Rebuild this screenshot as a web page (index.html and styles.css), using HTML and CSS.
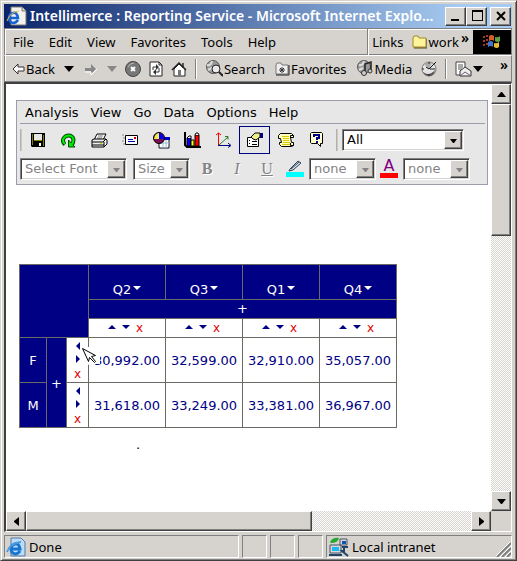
FILE: index.html
```html
<!DOCTYPE html>
<html lang="en">
<head>
    <meta charset="UTF-8">
    <meta name="viewport" content="width=device-width, initial-scale=1.0">
    <title>Intellimerce : Reporting Service</title>
    <link rel="stylesheet" href="styles.css">
</head>
<body>
    <div class="window">
        <header class="titlebar">
            <svg class="icon" width="21" height="20" viewBox="0 0 21 20"><path d="M5 1h11l4 4v14H5z" fill="#f4f2ec" stroke="#777"/><path d="M16 1v4h4" fill="#ddd" stroke="#777"/><path d="M12 14q-2 3-5 3-4-1-4-5t4-5 5 5H4" fill="none" stroke="#1464d8" stroke-width="2.5"/><path d="M1 15Q4 6 13 5" fill="none" stroke="#e5bd35" stroke-width="1"/></svg>
            <h1>Intellimerce : Reporting Service - Microsoft Internet Explo...</h1>
            <button class="winbtn" aria-label="Minimize"><svg width="12" height="12"><path d="M1 9h8v2H1z"/></svg></button>
            <button class="winbtn" aria-label="Maximize"><svg width="12" height="12"><path d="M1 0h11v11H1zM2 2v8h9V2z" fill-rule="evenodd"/></svg></button>
            <button class="winbtn close" aria-label="Close"><svg width="12" height="12"><path d="M2 2l8 8M10 2l-8 8" stroke="#000" stroke-width="2"/></svg></button>
        </header>

        <div class="menubar">
            <nav class="menus">
                <button>File</button>
                <button>Edit</button>
                <button>View</button>
                <button>Favorites</button>
                <button>Tools</button>
                <button>Help</button>
            </nav>
            <div class="links">
                <span>Links</span>
                <a href="#"><svg class="icon" width="15" height="14" viewBox="0 0 15 14"><path d="M1 12V3l1-2h4l1 2h7v9z" fill="#fdf39a" stroke="#a08a20"/><path d="M2 13h13V4" fill="none" stroke="#554a10"/></svg>work</a>
                <span class="more">»</span>
            </div>
            <div class="logo">
                <svg width="20" height="18" viewBox="0 0 20 18"><path d="M1 3h2v2H1zM1 7h2v2H1zM1 11h2v2H1zM4 2h2v2H4zM4 6h2v2H4zM4 10h2v2H4z" fill="#a23b2c"/><path d="M7 3q3-2 5 0v5q-2-2-5 0z" fill="#d95b2a"/><path d="M13 4q3 1 5-1v5q-2 2-5 0z" fill="#5da341"/><path d="M6 9q3-2 5 0v5q-2-2-5 0z" fill="#3c78cf"/><path d="M12 10q3 1 5-1v5q-2 2-5 0z" fill="#e7bd35"/></svg>
            </div>
        </div>

        <div class="toolbar">
            <button class="labeled"><svg width="13" height="12" viewBox="0 0 13 12"><path d="M1 6l5-5v3h6v4H6v3z" fill="#fff" stroke="#333"/></svg>Back</button>
            <svg class="icon" width="10" height="6"><path d="M0 0h10L5 6z"/></svg>
            <button class="forward" aria-label="Forward"><svg width="13" height="12" viewBox="0 0 13 12"><path d="M1 5h6V1l5 5-5 5V8H1z" fill="#888"/><path d="M1 9h6v3l6-6" fill="none" stroke="#fff"/></svg></button>
            <svg class="icon" width="10" height="6"><path d="M0 0h10L5 6z" fill="#888"/></svg>
            <button aria-label="Stop"><svg width="16" height="16" viewBox="0 0 16 16"><circle cx="8" cy="8" r="7.5" fill="#777" stroke="#444"/><path d="M3 6q2-4 6-4" stroke="#bbb" fill="none"/><path d="M6 6l4 4M10 6l-4 4" stroke="#fff" stroke-width="2"/></svg></button>
            <button aria-label="Refresh"><svg width="14" height="16" viewBox="0 0 14 16"><path d="M1 1h9l3 3v11H1z" fill="#fff" stroke="#222"/><path d="M10 1v3h3" fill="none" stroke="#222"/><path d="M4 9V6h4M10 7v4H6" fill="none" stroke="#333"/><path d="M7 3l3 3-3 3zM7 8v6l-3-3z" fill="#333"/></svg></button>
            <button aria-label="Home"><svg width="16" height="16" viewBox="0 0 16 16"><path d="M3 8v7h11V8L8 3z" fill="#fff" stroke="#222"/><path d="M11 2h2v5h-2z" fill="#555"/><path d="M1 9l7-7 7 7" fill="none" stroke="#222" stroke-width="1.5"/><path d="M7 9h3v6H7z" fill="#777"/></svg></button>
            <span class="sep"></span>
            <button class="labeled"><svg width="17" height="17" viewBox="0 0 17 17"><circle cx="7" cy="7" r="6.5" fill="#999" stroke="#555"/><path d="M1 5q4 1 5-4M2 10l4-2" stroke="#ddd" stroke-width="2" fill="none"/><circle cx="10" cy="9" r="4" fill="#e8e8e8" stroke="#222"/><path d="M13 12l4 4" stroke="#222" stroke-width="2"/></svg>Search</button>
            <button class="labeled"><svg width="15" height="14" viewBox="0 0 15 14"><path d="M1 12V3l1-2h4l1 2h6v9z" fill="#eee" stroke="#777"/><path d="M1 13h13V3" fill="none" stroke="#222"/><path d="M7 5v6M4 8h6M5 6l4 4M9 6l-4 4" stroke="#333"/></svg>Favorites</button>
            <button class="labeled"><svg width="17" height="17" viewBox="0 0 17 17"><circle cx="7" cy="7" r="6.5" fill="#999" stroke="#555"/><path d="M2 5q4 1 5-4M2 10l4-2" stroke="#ddd" stroke-width="2" fill="none"/><path d="M8 13V4l6-2v9" fill="none" stroke="#222" stroke-width="1.5"/><circle cx="7" cy="13" r="2.5" fill="#ccc" stroke="#333"/><circle cx="13" cy="11" r="2" fill="#ccc" stroke="#333"/></svg>Media</button>
            <button aria-label="History"><svg width="16" height="16" viewBox="0 0 16 16"><circle cx="8" cy="8" r="7" fill="#e4e4e4" stroke="#777"/><path d="M8 8L3 3q3-3 8-1z" fill="#aaa"/><path d="M2 11q6 5 12-2-1 6-6 6-4 0-6-4z" fill="#555"/><path d="M15 1L8 8 5 6" fill="none" stroke="#111"/><path d="M9 8h5M8 1v2M1 8h2M8 13v2" stroke="#222"/></svg></button>
            <span class="sep"></span>
            <button class="mail" aria-label="Mail"><svg width="17" height="16" viewBox="0 0 17 16"><path d="M1 1h9v13H1z" fill="#fff" stroke="#444"/><path d="M3 4h5M3 6h5M3 8h4" stroke="#555"/><path d="M5 10l5-4 6 4v5H5z" fill="#eee" stroke="#333"/><path d="M5 15l5-4 6 4" fill="none" stroke="#666"/></svg><svg width="10" height="6"><path d="M0 0h10L5 6z"/></svg></button>
            <span class="more">»</span>
        </div>

        <div class="view">
            <main class="page">
                <section class="panel">
                    <nav class="panel-menu">
                        <button>Analysis</button>
                        <button>View</button>
                        <button>Go</button>
                        <button>Data</button>
                        <button>Options</button>
                        <button>Help</button>
                    </nav>
                    <div class="tools">
                        <span class="handle"></span>
                        <button class="tool" aria-label="Save"><svg width="14" height="14"><path d="M0 0h14v14H1l-1-1z"/><path d="M1 1h1v11H1zM12 2h1v11h-1zM3 7h8v1H3z" fill="#808000"/><path d="M3 1h8v6H3z" fill="#e7e7e7"/><path d="M8 10h2v3H8z" fill="#fff"/></svg></button>
                        <button class="tool" aria-label="Refresh data"><svg width="15" height="15"><path d="M4 11.500Q1 9 2.500 5.500 4.500 2.500 7.500 2.500q4 0 5 4 0 3-1.500 5" fill="none" stroke="#004800" stroke-width="4"/><path d="M7.500 7v7h6.500z" fill="#0e0" stroke="#004800"/><path d="M4 11Q1 9 2.500 5.500 4.500 2.500 7.500 2.500q4 0 5 4 0 3-2 5" fill="none" stroke="#0e0" stroke-width="2"/></svg></button>
                        <button class="tool" aria-label="Print"><svg width="17" height="15"><path d="M6 1h9l-3 6H3z" fill="#fff" stroke="#000"/><path d="M7 3h5M6 5h5" stroke="#777"/><path d="M1 7l2-1h12l1 1v4l-3 3H1z" fill="#eee" stroke="#000"/><path d="M1 9h11l3-3M1 12h12M13 9v5" fill="none" stroke="#000"/><path d="M9 10h2v1H9z" fill="#dd0"/></svg></button>
                        <button class="tool" aria-label="Mail report"><svg width="17" height="12"><path d="M0 1h2M1 4h2M0 7h2M1 10h2" stroke="#888"/><path d="M3.500 1.500h12v9h-12z" fill="#fff" stroke="#000"/><path d="M6 5h5v1H6zM6 7h7v1H6z" fill="#00a"/><path d="M12 3h2v2h-2z" fill="#c00"/></svg></button>
                        <button class="tool" aria-label="Chart and table"><svg width="17" height="17"><path d="M6 6h10v10H6z" fill="#fff" stroke="#112"/><path d="M6 5h11v3H6z" fill="#00c"/><path d="M6 11h10M10 8v8M13 8v8" stroke="#99bbdd"/><circle cx="6" cy="6" r="5.5" fill="#7a1050" stroke="#000"/><path d="M6 7V1Q2 1 1 7z" fill="#ee4"/><path d="M6 7V1q4 0 5 6z" fill="#00f"/></svg></button>
                        <button class="tool" aria-label="Bar chart"><svg width="17" height="16"><path d="M1 0v13l2 2h14" fill="none" stroke="#000" stroke-width="2"/><path d="M3 6h4v8H3z" fill="#00f" stroke="#000"/><path d="M7 8h3v6H7z" fill="#ff0" stroke="#000"/><path d="M11 3h4v11h-4z" fill="#f00" stroke="#000"/><path d="M3 6l2-2h2v2M11 3l1-2h2l1 2" fill="#fff" stroke="#000"/></svg></button>
                        <button class="tool" aria-label="Axes"><svg width="16" height="16"><path d="M2.500 1v13M0 3l2.500-2L5 3" fill="none" stroke="#f00"/><path d="M3 13l9-8M9 4.500h3v3" fill="none" stroke="#2a7a2a"/><path d="M2 13.500h12M12 11l3 2.500-3 2" fill="none" stroke="#008"/></svg></button>
                        <button class="tool active" aria-label="Properties"><svg width="18" height="16"><path d="M1.500 5.500h11v9h-11z" fill="#fff" stroke="#000"/><path d="M3 8.500h1M3 11.500h1M6 9.500h5M6 12.500h5" stroke="#000"/><path d="M5 5l4-4h5v4l-4 3-3-1z" fill="#ee8" stroke="#000"/><path d="M14 1h3v5h-3z" fill="#008"/></svg></button>
                        <button class="tool" aria-label="Script"><svg width="16" height="15"><path d="M2.500.500h11l2 2v2h-3l1 5h2v3l-2 1h-10l-2-2v-2h2l-1-4h-2v-3z" fill="#ffb" stroke="#000"/><path d="M4 3.500h7M5 5.500h6M5 7.500h6M5 9.500h7M4 11.500h8" stroke="#d8c800"/><path d="M12.500 5V2.500h3M12.500 10v2.500h3" fill="none" stroke="#000"/></svg></button>
                        <button class="tool" aria-label="Help"><svg width="14" height="16"><path d="M1.500.500h10l1 1v10h-2v3l-3-3h-6l-1-1v-9z" fill="#ffc" stroke="#000"/><path d="M4 5V3h5v3H7v2M7 9v2" fill="none" stroke="#008" stroke-width="2"/></svg></button>
                        <span class="handle thin"></span>
                        <span class="combo wide"><select aria-label="Filter"><option>All</option></select><svg class="drop" width="17" height="17"><path d="M5 7h7l-3 4h-1z"/></svg></span>
                    </div>
                    <div class="format">
                        <span class="combo font"><select aria-label="Font" disabled><option>Select Font</option></select><svg class="drop" width="17" height="17"><path d="M5 7h7l-3 4h-1z"/></svg></span>
                        <span class="combo size"><select aria-label="Size" disabled><option>Size</option></select><svg class="drop" width="17" height="17"><path d="M5 7h7l-3 4h-1z"/></svg></span>
                        <div class="styles">
                            <button disabled><b>B</b></button>
                            <button disabled><i>I</i></button>
                            <button disabled><u>U</u></button>
                        </div>
                        <button class="color" aria-label="Highlight"><svg width="18" height="17"><path d="M0 12h18v5H0z" fill="#0ff"/><path d="M4 9l8-8 3 2-8 7-4 1z" fill="#cde" stroke="#345"/><path d="M5 9l8-7" stroke="#345"/></svg></button>
                        <span class="combo tint"><select aria-label="Highlight color" disabled><option>none</option></select><svg class="drop" width="17" height="17"><path d="M5 7h7l-3 4h-1z"/></svg></span>
                        <button class="color letter" aria-label="Text color">A</button>
                        <span class="combo tint"><select aria-label="Text color value" disabled><option>none</option></select><svg class="drop" width="17" height="17"><path d="M5 7h7l-3 4h-1z"/></svg></span>
                    </div>
                </section>

                <table class="report">
                    <colgroup><col class="c-name"><col class="c-plus"><col class="c-move"><col class="c-data" span="4"></colgroup>
                    <tr class="quarters">
                        <th colspan="3" rowspan="3"></th>
                        <th>Q2<i class="tri down"></i></th>
                        <th>Q3<i class="tri down"></i></th>
                        <th>Q1<i class="tri down"></i></th>
                        <th>Q4<i class="tri down"></i></th>
                    </tr>
                    <tr class="short"><th colspan="4">+</th></tr>
                    <tr class="short">
                        <td><div class="sort"><i class="tri up"></i><i class="tri down"></i><a href="#">x</a></div></td>
                        <td><div class="sort"><i class="tri up"></i><i class="tri down"></i><a href="#">x</a></div></td>
                        <td><div class="sort"><i class="tri up"></i><i class="tri down"></i><a href="#">x</a></div></td>
                        <td><div class="sort"><i class="tri up"></i><i class="tri down"></i><a href="#">x</a></div></td>
                    </tr>
                    <tr class="values">
                        <th>F</th>
                        <th rowspan="2">+</th>
                        <td>
                            <div class="move"><i class="tri left"></i><i class="tri right"></i><a href="#">x</a>
                                <svg class="cursor" width="20" height="20"><path d="M0 0h8l8 7h3v10H9L5 19z" fill="#fff"/><path d="M1.500 1.500l6 13 1-4 5 5 1-1-4-5 4-1z" fill="#fff" stroke="#000"/></svg>
                            </div>
                        </td>
                        <td>30,992.00</td><td>32,599.00</td><td>32,910.00</td><td>35,057.00</td>
                    </tr>
                    <tr class="values">
                        <th>M</th>
                        <td><div class="move"><i class="tri left"></i><i class="tri right"></i><a href="#">x</a></div></td>
                        <td>31,618.00</td><td>33,249.00</td><td>33,381.00</td><td>36,967.00</td>
                    </tr>
                </table>
                <p class="note">.</p>
            </main>
            <div class="scroll vertical">
                <button aria-label="Scroll up"><svg width="9" height="5"><path d="M0 5h9L5 0H4z"/></svg></button>
                <div class="thumb"></div>
                <button class="end" aria-label="Scroll down"><svg width="9" height="5"><path d="M0 0h9L5 5H4z"/></svg></button>
            </div>
            <div class="scroll horizontal">
                <button aria-label="Scroll left"><svg width="5" height="9"><path d="M5 0v9L0 5V4z"/></svg></button>
                <div class="thumb"></div>
                <button class="end" aria-label="Scroll right"><svg width="5" height="9"><path d="M0 0v9l5-4V4z"/></svg></button>
            </div>
        </div>

        <footer class="status">
            <div class="cell done"><svg class="icon" width="20" height="20" viewBox="0 0 20 20"><path d="M5 1h10l4 4v14H5z" fill="#bcdcf8" stroke="#5578a8"/><path d="M14 14q-2 3-5 3-4-1-4-5t4-5 5 5H6" fill="none" stroke="#1875cd" stroke-width="3"/><path d="M1 15Q4 6 15 5" fill="none" stroke="#4a9be0" stroke-width="2"/></svg>Done</div>
            <div class="cell"></div>
            <div class="cell"></div>
            <div class="cell"></div>
            <div class="cell zone"><svg class="icon" width="21" height="20" viewBox="0 0 21 20"><path d="M2 8h11v8H2zM12 2h7v6h-7z" fill="#d8d8d8" stroke="#456"/><path d="M4 10h7v4H4z" fill="#1ab8f5"/><path d="M14 4h4v3h-4z" fill="#15a"/><path d="M1 18h13M14 10h6M16 10v4h-2l6 5" stroke="#246" fill="none" stroke-width="2"/><path d="M2 5q3-5 9-4-1 5-8 5z" fill="#25a82d"/></svg>Local intranet
                <svg class="grip" width="15" height="15"><path d="M1 15L15 1M6 15l9-9M11 15l4-4" stroke="#808080" stroke-width="2"/><path d="M0 14L14 0M4 15L15 4M9 15l6-6" stroke="#fff"/></svg>
            </div>
        </footer>
    </div>
</body>
</html>
```
FILE: styles.css
```css
* {
    box-sizing: border-box;
}

body {
    margin: 0;
    font-family: "Noto Sans", Tahoma, sans-serif;
    font-size: 13px;
    line-height: 18px;
    color: #000;
}

button {
    display: flex;
    align-items: center;
    justify-content: center;
    padding: 0;
    border: 0;
    background: none;
    font: inherit;
    color: inherit;
}

svg {
    display: block;
    flex: none;
}

a {
    color: inherit;
    text-decoration: none;
}

.window {
    display: flex;
    flex-direction: column;
    min-height: 100vh;
    padding: 3px 4px 2px 3px;
    background: #d6d3ce;
    border: 1px solid #d6d3ce;
    border-right-color: #404040;
    border-bottom-color: #404040;
    box-shadow: inset 1px 1px #fff, inset -1px -1px #808080;
}

/* title bar */
.titlebar {
    display: flex;
    align-items: center;
    height: 24px;
    padding: 0 1px 0 2px;
    background: linear-gradient(to right, #0a246a, #a6caf0 90%);
}

.titlebar h1 {
    flex: 1;
    min-width: 0;
    margin: 0 0 0 3px;
    overflow: hidden;
    white-space: nowrap;
    font-size: 14px;
    font-weight: 600;
    color: #fff;
}

.winbtn {
    width: 21px;
    height: 19px;
}

.winbtn.close {
    margin-left: 3px;
}

.winbtn,
.scroll button,
.thumb,
.drop {
    background: #d6d3ce;
    border: 1px solid #fff;
    border-right-color: #404040;
    border-bottom-color: #404040;
    box-shadow: inset -1px -1px #808080;
}

/* browser menu and toolbar */
.menubar {
    display: flex;
    height: 28px;
    border: 1px solid #808080;
    border-bottom-color: #fff;
    box-shadow: inset 1px 1px #fff, inset 0 -1px #808080;
}

.menus {
    flex: 1;
    display: flex;
    gap: 15px;
    padding-left: 8px;
}

.links {
    display: flex;
    align-items: center;
    gap: 8px;
    padding: 0 4px;
    border-left: 1px solid #808080;
    box-shadow: inset 1px 1px #fff;
}

.links a {
    display: flex;
    align-items: center;
    gap: 2px;
}

.links .more {
    margin-left: -6px;
}

.more {
    align-self: flex-start;
    font-size: 14px;
    font-weight: 600;
}

.logo {
    display: flex;
    align-items: center;
    justify-content: center;
    width: 38px;
    margin: 1px 0;
    background: #000;
}

.toolbar {
    display: flex;
    align-items: center;
    gap: 8px;
    height: 26px;
    padding: 0 3px 0 6px;
    border: 1px solid #808080;
    border-top: 0;
    box-shadow: inset 1px 0 #fff;
}

.toolbar .labeled {
    gap: 1px;
    padding: 0 1px;
}

.toolbar .forward {
    padding: 0 2px;
}

.toolbar .more {
    margin-left: auto;
}

.mail {
    gap: 1px;
}

.sep {
    width: 2px;
    height: 20px;
    border-left: 1px solid #808080;
    border-right: 1px solid #fff;
}

/* document area with its scrollbars */
.view {
    flex: 1;
    display: grid;
    grid-template-columns: 1fr 20px;
    grid-template-rows: 1fr 20px;
    border: 2px solid #404040;
    border-right: 1px solid #fff;
    border-bottom: 1px solid #fff;
}

.page {
    min-width: 0;
    padding: 16px 3px 0 10px;
    background: #fff;
    font-family: "DejaVu Sans", Verdana, sans-serif;
}

.scroll {
    display: flex;
    background: repeating-conic-gradient(#fff 0 25%, #d6d3ce 0 50%) 0 0 / 2px 2px;
}

.scroll button {
    width: 20px;
    height: 20px;
}

.scroll .end {
    margin-top: auto;
}

.vertical {
    flex-direction: column;
}

.vertical .thumb {
    height: 31%;
}

.horizontal .thumb {
    width: 59%;
}

.horizontal .end {
    margin-top: 0;
    margin-left: auto;
}

/* report panel */
.panel {
    padding: 0 2px 3px 3px;
    background: #e7e7e7;
    border: 1px solid #9c9cac;
}

.panel-menu {
    display: flex;
    gap: 12px;
    height: 23px;
    padding: 2px 0 0 5px;
    border-bottom: 1px solid #9c9cac;
}

.tools {
    display: flex;
    align-items: center;
    height: 32px;
}

.handle {
    width: 2px;
    height: 22px;
    background: #b5b0ac;
    border-right: 1px solid #ccc8c4;
}

.handle.thin {
    margin: 0 4px;
}

.tool {
    width: 31px;
    height: 28px;
}

.tool.active {
    border: 1px solid #000084;
}

.format {
    display: flex;
    align-items: center;
    height: 25px;
}

.combo {
    display: flex;
    height: 22px;
    padding: 1px;
    background: #fff;
    border: 1px solid #808080;
    border-right-color: #fff;
    border-bottom-color: #fff;
    box-shadow: inset 1px 1px #404040, inset -1px -1px #d6d3ce;
}

.combo select {
    flex: 1;
    min-width: 0;
    padding: 0 0 0 3px;
    border: 0;
    background: none;
    appearance: none;
    font: inherit;
    color: #000;
    opacity: 1;
}

.combo select:disabled {
    color: #848284;
}

.combo select:disabled + .drop {
    fill: #848284;
}

.drop {
    width: 18px;
    height: 18px;
}

.wide {
    width: 122px;
}

.font {
    width: 107px;
}

.size {
    width: 57px;
    margin-left: 6px;
}

.tint {
    width: 67px;
}

.styles {
    display: flex;
    padding-left: 2px;
}

.styles button {
    width: 30px;
    font-family: "Liberation Serif", serif;
    font-size: 16px;
    color: #848284;
    text-shadow: 1px 1px #fff;
}

.color {
    width: 18px;
    margin: 0 5px 0 4px;
}

.letter {
    height: 18px;
    border-bottom: 5px solid #f00;
    font-size: 16px;
    color: #800080;
}

/* cross table */
.report {
    margin: 79px 0 0 3px;
    border-collapse: collapse;
    table-layout: fixed;
    width: 378px;
    color: #000084;
}

.c-name {
    width: 27px;
}

.c-plus {
    width: 20px;
}

.c-move {
    width: 22px;
}

.c-data {
    width: 77px;
}

.report th,
.report td {
    padding: 0;
    border: 1px solid #6b6963;
    text-align: center;
}

.report th {
    background: #000084;
    color: #fff;
    font-weight: 400;
}

.quarters th {
    height: 35px;
    vertical-align: bottom;
}

.short {
    height: 19px;
}

.values {
    height: 45px;
}

.report .values > td,
.report .values > th {
    padding-top: 2px;
}

.tri {
    display: inline-block;
    border: 4px solid transparent;
}

.tri.down {
    border-top-color: currentColor;
    border-bottom: 0;
}

.tri.up {
    border-bottom-color: currentColor;
    border-top: 0;
}

.tri.left {
    border-right-color: currentColor;
    border-left: 0;
}

.tri.right {
    border-left-color: currentColor;
    border-right: 0;
}

th .tri {
    margin: 0 0 4px 2px;
}

.sort {
    display: flex;
    align-items: center;
    justify-content: center;
    gap: 6px;
    padding-right: 3px;
    line-height: 16px;
}

.sort .tri {
    margin-bottom: 2px;
}

.sort a,
.move a {
    font-size: 12px;
    color: #e00000;
}

.move {
    position: relative;
    display: flex;
    flex-direction: column;
    align-items: center;
    gap: 5px;
    line-height: 13px;
}

.cursor {
    position: absolute;
    left: 14px;
    top: 5px;
}

.note {
    margin: 8px 0 0 120px;
}

/* status bar */
.status {
    display: flex;
    gap: 3px;
    height: 23px;
    margin-top: 3px;
}

.cell {
    display: flex;
    align-items: center;
    gap: 3px;
    width: 25px;
    border: 1px solid #808080;
    border-right-color: #fff;
    border-bottom-color: #fff;
}

.done {
    flex: 1;
    padding-left: 1px;
}

.zone {
    width: 186px;
    padding-left: 1px;
}

.grip {
    margin-left: auto;
    align-self: flex-end;
}
```
